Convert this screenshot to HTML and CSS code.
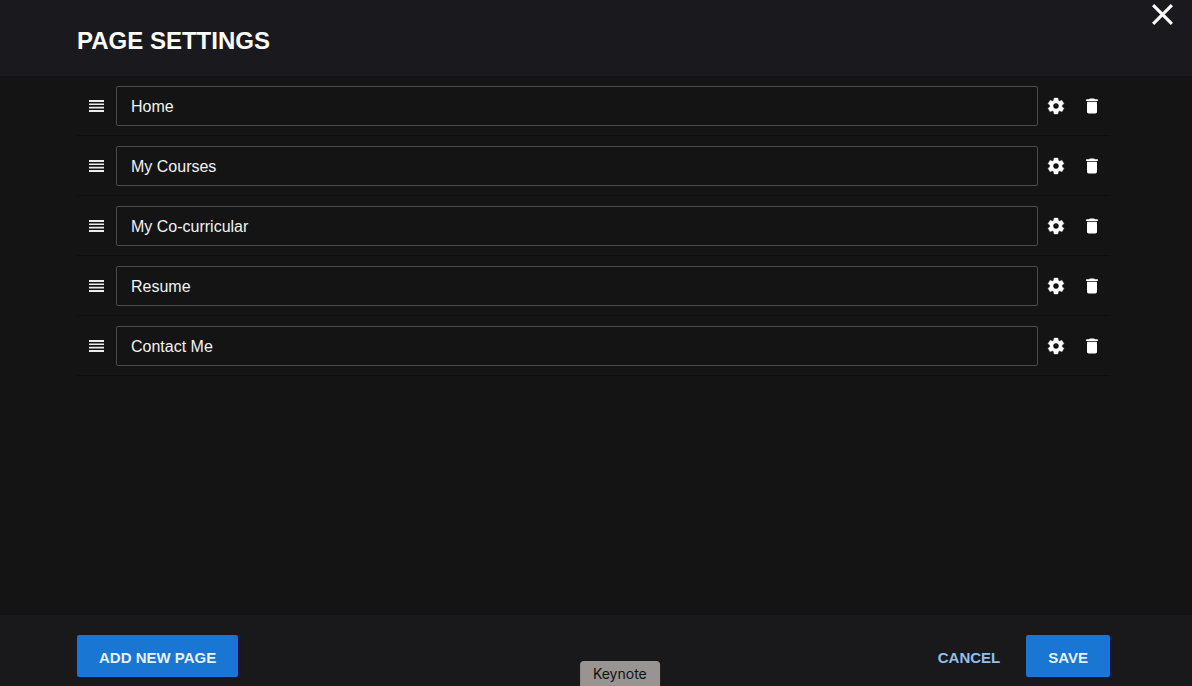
FILE: index.html
```html
<!DOCTYPE html>
<html lang="en">
<head>
    <meta charset="UTF-8">
    <meta name="viewport" content="width=device-width, initial-scale=1.0">
    <title>Page Settings</title>
    <link rel="stylesheet" href="styles.css">
</head>
<body>

    <!-- Shared icons -->
    <svg class="icon-defs" aria-hidden="true">
        <symbol id="icon-drag" viewBox="0 0 20 20">
            <path d="M2 4h15v2H2zM2 7.4h15v1.7H2zM2 10.7h15v1.7H2zM2 14h15v2H2z"/>
        </symbol>
        <symbol id="icon-settings" viewBox="0 0 24 24">
            <path stroke="currentColor" stroke-width=".5" d="M19.14 12.94c.04-.3.06-.61.06-.94 0-.32-.02-.64-.07-.94l2.03-1.58c.18-.14.23-.41.12-.61l-1.92-3.32c-.12-.22-.37-.29-.59-.22l-2.39.96c-.5-.38-1.03-.7-1.62-.94l-.36-2.54c-.04-.24-.24-.41-.48-.41h-3.84c-.24 0-.43.17-.47.41l-.36 2.54c-.59.24-1.13.57-1.62.94l-2.39-.96c-.22-.08-.47 0-.59.22L2.74 8.87c-.12.21-.08.47.12.61l2.03 1.58c-.05.3-.09.63-.09.94s.02.64.07.94l-2.03 1.58c-.18.14-.23.41-.12.61l1.92 3.32c.12.22.37.29.59.22l2.39-.96c.5.38 1.03.7 1.62.94l.36 2.54c.05.24.24.41.48.41h3.84c.24 0 .44-.17.47-.41l.36-2.54c.59-.24 1.13-.56 1.62-.94l2.39.96c.22.08.47 0 .59-.22l1.92-3.32c.12-.22.07-.47-.12-.61l-2.01-1.58zM12 15.6c-1.98 0-3.6-1.62-3.6-3.6s1.62-3.6 3.6-3.6 3.6 1.62 3.6 3.6-1.62 3.6-3.6 3.6z"/>
        </symbol>
        <symbol id="icon-delete" viewBox="0 0 24 24">
            <path d="M6 19c0 1.1.9 2 2 2h8c1.1 0 2-.9 2-2V7H6v12zM19 4h-3.5l-1-1h-5l-1 1H5v2h14V4z"/>
        </symbol>
    </svg>

    <header class="header">
        <h1>PAGE SETTINGS</h1>
        <button class="close-button" type="button" aria-label="Close">
            <svg viewBox="0 0 24 24"><path d="M3 3l18 18M21 3l-18 18"/></svg>
        </button>
    </header>

    <main class="content">
        <ul class="page-list">
            <li class="page-row">
                <svg class="icon drag-handle"><use href="#icon-drag"/></svg>
                <input class="page-name" type="text" value="Home" aria-label="Page name">
                <button class="icon-button" type="button" aria-label="Settings"><svg class="icon"><use href="#icon-settings"/></svg></button>
                <button class="icon-button" type="button" aria-label="Delete"><svg class="icon"><use href="#icon-delete"/></svg></button>
            </li>
            <li class="page-row">
                <svg class="icon drag-handle"><use href="#icon-drag"/></svg>
                <input class="page-name" type="text" value="My Courses" aria-label="Page name">
                <button class="icon-button" type="button" aria-label="Settings"><svg class="icon"><use href="#icon-settings"/></svg></button>
                <button class="icon-button" type="button" aria-label="Delete"><svg class="icon"><use href="#icon-delete"/></svg></button>
            </li>
            <li class="page-row">
                <svg class="icon drag-handle"><use href="#icon-drag"/></svg>
                <input class="page-name" type="text" value="My Co-curricular" aria-label="Page name">
                <button class="icon-button" type="button" aria-label="Settings"><svg class="icon"><use href="#icon-settings"/></svg></button>
                <button class="icon-button" type="button" aria-label="Delete"><svg class="icon"><use href="#icon-delete"/></svg></button>
            </li>
            <li class="page-row">
                <svg class="icon drag-handle"><use href="#icon-drag"/></svg>
                <input class="page-name" type="text" value="Resume" aria-label="Page name">
                <button class="icon-button" type="button" aria-label="Settings"><svg class="icon"><use href="#icon-settings"/></svg></button>
                <button class="icon-button" type="button" aria-label="Delete"><svg class="icon"><use href="#icon-delete"/></svg></button>
            </li>
            <li class="page-row">
                <svg class="icon drag-handle"><use href="#icon-drag"/></svg>
                <input class="page-name" type="text" value="Contact Me" aria-label="Page name">
                <button class="icon-button" type="button" aria-label="Settings"><svg class="icon"><use href="#icon-settings"/></svg></button>
                <button class="icon-button" type="button" aria-label="Delete"><svg class="icon"><use href="#icon-delete"/></svg></button>
            </li>
        </ul>
    </main>

    <footer class="footer">
        <button class="button primary" type="button">ADD NEW PAGE</button>
        <div class="footer-actions">
            <button class="button text" type="button">CANCEL</button>
            <button class="button primary" type="button">SAVE</button>
        </div>
    </footer>

    <div class="dock-label">Keynote</div>

</body>
</html>
```
FILE: styles.css
```css
* {
    box-sizing: border-box;
}

body {
    margin: 0;
    min-height: 100vh;
    display: flex;
    flex-direction: column;
    background-color: #141414;
    color: white;
    font-family: "Liberation Sans", Arial, sans-serif;
    font-size: 16px;
}

button {
    font-family: inherit;
    color: inherit;
    background: none;
    border: none;
    padding: 0;
    cursor: pointer;
}

.icon-defs {
    display: none;
}

.icon {
    display: block;
    width: 20px;
    height: 20px;
    fill: currentColor;
}

/* Header */
.header {
    position: relative;
    padding: 27px 82px 21px 77px;
    background-color: #1a191e;
}

h1 {
    margin: 0;
    font-size: 24px;
    line-height: 28px;
}

.close-button {
    position: absolute;
    top: 2px;
    right: 17px;
}

.close-button svg {
    display: block;
    width: 25px;
    height: 25px;
    fill: none;
    stroke: currentColor;
    stroke-width: 3;
}

/* Page list */
.content {
    flex: 1;
    padding: 0 82px 0 77px;
}

.page-list {
    list-style: none;
    margin: 0;
    padding: 0;
}

.page-row {
    display: flex;
    align-items: center;
    height: 60px;
    padding-left: 10px;
    border-bottom: 1px solid #0e0e0e;
}

.drag-handle {
    margin-right: 9px;
    color: #ececec;
}

.page-name {
    flex: 1;
    min-width: 0;
    height: 40px;
    padding: 2px 14px 0;
    border: 1px solid #4c4c4e;
    border-radius: 2px;
    background: none;
    color: #f2f2f2;
    font-family: inherit;
    font-size: 16px;
}

.icon-button {
    padding: 8px;
}

/* Footer */
.footer {
    display: flex;
    justify-content: space-between;
    padding: 20px 82px 9px 77px;
    background-color: #19191c;
}

.footer-actions {
    display: flex;
    gap: 4px;
}

.button {
    padding: 2px 22px 0;
    height: 42px;
    border-radius: 2px;
    font-size: 15px;
    font-weight: bold;
}

.button.primary {
    background-color: #1976d2;
    color: #e6f1fb;
    box-shadow: 1px 1px 2px #001a5c;
}

.button.text {
    color: #90bfea;
}

/* Dock tooltip over the bottom edge */
.dock-label {
    position: absolute;
    bottom: 0;
    left: 52%;
    transform: translateX(-50%);
    padding: 4px 13px 3px;
    border-radius: 4px 4px 0 0;
    background-color: #989492;
    color: #111;
    font-family: Inter, sans-serif;
    font-size: 14px;
    line-height: 18px;
}
```
